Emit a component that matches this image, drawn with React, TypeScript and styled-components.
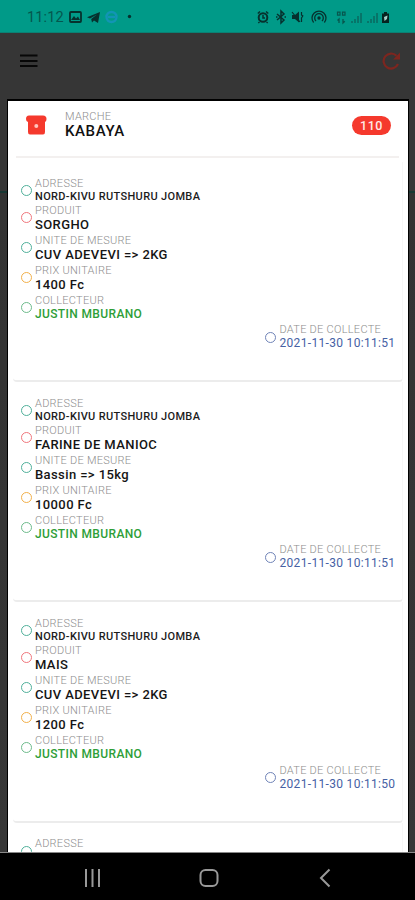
import React from 'react';
import styled, { createGlobalStyle } from 'styled-components';

const GlobalStyle = createGlobalStyle`
  * { box-sizing: border-box; }
  html, body { margin: 0; padding: 0; background: #363636; }
  body { font-family: Roboto, "Liberation Sans", sans-serif; }
  svg { display: block; flex: none; }
`;

const Screen = styled.div`
  width: 415px;
  height: 900px;
  display: flex;
  flex-direction: column;
  overflow: hidden;
  background: #363636;
`;

const StatusBar = styled.header`
  flex: none;
  height: 33px;
  padding: 2px 24px 0 27px;
  display: flex;
  align-items: center;
  justify-content: space-between;
  background: #009a88;
  border-bottom: 1px solid #0b8174;
`;

const StatusGroup = styled.div`
  display: flex;
  align-items: center;
`;

const Clock = styled.span`
  width: 37px;
  padding-top: 1px;
  font-size: 14.5px;
  line-height: 18px;
  letter-spacing: 0.15px;
  color: #04574e;
`;

const Toolbar = styled.div`
  flex: none;
  height: 66px;
  padding: 0 14px 10px 20px;
  display: flex;
  align-items: center;
  justify-content: space-between;
`;

const Body = styled.div`
  flex: 1;
  min-height: 0;
  padding: 0 6px 0 7px;
  background: linear-gradient(#363636 92px, #173733 92px, #173733 94px, #333 94px, #373737 100%);
  border-bottom: 1px solid #888;
`;

const Dialog = styled.main`
  height: 100%;
  overflow: hidden;
  border: 1px solid #000;
  border-top-width: 2px;
  border-bottom: 0;
  background: #fff;
  padding: 0 5px 0 5px;
`;

const MarketHeader = styled.section`
  height: 57px;
  margin: 0 4px 0 3px;
  padding: 0 8px 0 9px;
  display: flex;
  align-items: flex-start;
  border-bottom: 2px solid #f3f0ef;
`;

const MarketIcon = styled.div`
  width: 40px;
  padding-top: 13px;
`;

const MarketText = styled.div`
  flex: 1;
  padding-top: 9px;
`;

const MarketName = styled.div`
  font-size: 15px;
  line-height: 17px;
  font-weight: 500;
  letter-spacing: 0.6px;
  color: #111;
`;

const Badge = styled.span`
  width: 39px;
  height: 19px;
  margin-top: 15px;
  border-radius: 10px;
  display: flex;
  align-items: center;
  justify-content: center;
  background: #f5392d;
  color: #ffe9e6;
  font-size: 12.5px;
  font-weight: 500;
  letter-spacing: 0.5px;
`;

const Card = styled.article`
  height: 220.2px;
  padding: 14.7px 7px 0 7px;
  border-bottom: 2px solid #ececec;
  border-right: 1px solid #f7f7f7;
  border-radius: 0 0 4px 4px;
`;

const CardList = styled.div`
  padding-top: 4px;
`;

const Field = styled.div<{ $compact?: boolean; $end?: boolean }>`
  height: ${(p) => (p.$compact ? 27 : 30)}px;
  margin-top: ${(p) => (p.$end ? -0.4 : 0)}px;
  display: flex;
  align-items: flex-start;
  padding-left: ${(p) => (p.$end ? 244.5 : 0)}px;
`;

const Ring = styled.span<{ $color: string }>`
  flex: none;
  width: 11px;
  height: 11px;
  margin: 8.3px 3.4px 0 0.6px;
  border: 1.4px solid ${(p) => p.$color};
  border-radius: 50%;
`;

const Label = styled.div`
  font-size: 11px;
  line-height: 13px;
  font-weight: 300;
  letter-spacing: 0.27px;
  color: #8d8d8d;
  white-space: nowrap;
`;

type Tone = 'address' | 'plain' | 'person' | 'date';

const tones: Record<Tone, { size: number; line: number; weight: number; space: number; color: string }> = {
  address: { size: 11, line: 14, weight: 500, space: 0.34, color: '#1c1c1c' },
  plain: { size: 13, line: 16, weight: 500, space: 0.4, color: '#151515' },
  person: { size: 12, line: 15, weight: 500, space: 0.36, color: '#2e9e38' },
  date: { size: 12, line: 15, weight: 400, space: 0.32, color: '#4661a4' },
};

const Value = styled.div<{ $tone: Tone }>`
  font-size: ${(p) => tones[p.$tone].size}px;
  line-height: ${(p) => tones[p.$tone].line}px;
  font-weight: ${(p) => tones[p.$tone].weight};
  letter-spacing: ${(p) => tones[p.$tone].space}px;
  color: ${(p) => tones[p.$tone].color};
  white-space: nowrap;
`;

const NavBar = styled.nav`
  flex: none;
  height: 47px;
  padding: 2px 84px 0 84px;
  display: grid;
  grid-template-columns: 115px 1fr 12px;
  align-items: center;
  background: #000;
`;

interface Item {
  product: string;
  unit: string;
  price: string;
  date: string;
}

const items: Item[] = [
  { product: 'SORGHO', unit: 'CUV ADEVEVI => 2KG', price: '1400 Fc', date: '2021-11-30 10:11:51' },
  { product: 'FARINE DE MANIOC', unit: 'Bassin => 15kg', price: '10000 Fc', date: '2021-11-30 10:11:51' },
  { product: 'MAIS', unit: 'CUV ADEVEVI => 2KG', price: '1200 Fc', date: '2021-11-30 10:11:50' },
];

interface EntryProps {
  label: string;
  value?: string;
  color: string;
  tone?: Tone;
}

function Entry({ label, value, color, tone = 'plain' }: EntryProps) {
  return (
    <Field $compact={tone === 'address'} $end={tone === 'date'}>
      <Ring $color={color} />
      <div>
        <Label>{label}</Label>
        {value && <Value $tone={tone}>{value}</Value>}
      </div>
    </Field>
  );
}

function PriceCard({ item }: { item?: Item }) {
  return (
    <Card>
      <Entry label="ADRESSE" value={item && 'NORD-KIVU RUTSHURU JOMBA'} color="#4fb09a" tone="address" />
      {item && (
        <>
          <Entry label="PRODUIT" value={item.product} color="#f0767c" />
          <Entry label="UNITE DE MESURE" value={item.unit} color="#4fb09a" />
          <Entry label="PRIX UNITAIRE" value={item.price} color="#f2b04a" />
          <Entry label="COLLECTEUR" value="JUSTIN MBURANO" color="#6dbb8b" tone="person" />
          <Entry label="DATE DE COLLECTE" value={item.date} color="#6f83b7" tone="date" />
        </>
      )}
    </Card>
  );
}

const ink = '#06312e';

function NoticeIcons() {
  return (
    <svg width="70" height="16" viewBox="0 0 70 16" fill="none">
      <rect x="6" y="3" width="11" height="10" rx="1" stroke={ink} strokeWidth="1.8" />
      <path d="M7 11l3-4 2 2.4 2-1.8 2 3.4z" fill={ink} />
      <path d="M23 8.2L36 3l-2 11-4-2.4-2 2-.8-3.6L33 5.6 26 9.4z" fill={ink} />
      <circle cx="47.5" cy="8" r="5" stroke="#1295b5" strokeWidth="2.4" />
      <path d="M44 8h7" stroke="#1295b5" strokeWidth="2.4" />
      <circle cx="65.5" cy="7.5" r="1.7" fill={ink} />
    </svg>
  );
}

function SystemIcons() {
  return (
    <svg width="134" height="16" viewBox="0 0 134 16" fill="none" stroke={ink}>
      <circle cx="6" cy="8.5" r="4.3" strokeWidth="2" />
      <path d="M6 6v3h2M.8 4.5L3 2.5M9 2.5l2.3 2M2.5 13l-1.2 1M9.5 13l1.2 1" strokeWidth="1.5" />
      <path d="M20 5l7 6-3 3V2l3 3-7 6" strokeWidth="1.5" />
      <path d="M19 8h1.5M27.5 8H29" strokeWidth="1.5" />
      <path d="M35 6h3l4-3.5v11L38 10h-3z" fill={ink} stroke="none" />
      <path d="M35 3l8 10M44.5 3v3l1.3 1-1.3 2v4" strokeWidth="1.2" />
      <circle cx="62" cy="9" r="1.7" fill={ink} stroke="none" />
      <path d="M56.6 13.5a7 7 0 1 1 10.8 0M59 12a4.3 4.3 0 1 1 6 0" strokeWidth="1.3" />
      <g stroke="#07564d">
        <path d="M80.5 3.2h2.5v3h-2.5zM85.5 3.2H88v3h-2.5z" strokeWidth="1.2" />
        <path d="M82 14v-4l-1.5 1.5M86 10v4l1.8-1.8" strokeWidth="1.3" />
      </g>
      <g stroke="#087166" strokeWidth="1.8">
        <path d="M95 14v-2M98 14v-4M101 14V7M104 14V4" />
        <path d="M111 14v-2M114 14v-4M117 14V7M120 14V4" />
      </g>
      <path d="M125 4.5h2V3h3v1.5h2V14h-7z" fill="#052420" stroke="none" />
      <path d="M127 8l3.500-1.500-.5 3.500-2.500 2z" fill="#a4cfc8" stroke="none" />
    </svg>
  );
}

export default function App() {
  return (
    <>
      <GlobalStyle />
      <Screen>
        <StatusBar>
          <StatusGroup>
            <Clock>11:12</Clock>
            <NoticeIcons />
          </StatusGroup>
          <StatusGroup>
            <SystemIcons />
          </StatusGroup>
        </StatusBar>
        <Toolbar>
          <svg width="18" height="14" viewBox="0 0 18 14" stroke="#070707" strokeWidth="2">
            <path d="M0 1.5h17.5M0 7h17.5M0 12h17.5" />
          </svg>
          <svg width="19" height="20" viewBox="0 0 19 20" fill="none">
            <path d="M14.500 4.800A7.500 7.500 0 1 0 16 13" stroke="#7d261f" strokeWidth="2.200" />
            <path d="M18 1.500v7h-7z" fill="#7d261f" />
          </svg>
        </Toolbar>
        <Body>
          <Dialog>
            <MarketHeader>
              <MarketIcon>
                <svg width="22" height="22" viewBox="0 0 22 22">
                  <path
                    d="M4 1.500h14q3.500 0 3.500 3.500 0 2.500-1.500 3V18q0 2.500-2 2.500H5q-2 0-2-2.500V8Q1 7.500 1 5q0-3.500 3-3.500z"
                    fill="#f5392d"
                  />
                  <circle cx="11.300" cy="12" r="2" fill="#ffc4bd" />
                </svg>
              </MarketIcon>
              <MarketText>
                <Label>MARCHE</Label>
                <MarketName>KABAYA</MarketName>
              </MarketText>
              <Badge>110</Badge>
            </MarketHeader>
            <CardList>
              {items.map((item, i) => (
                <PriceCard key={i} item={item} />
              ))}
              <PriceCard />
            </CardList>
          </Dialog>
        </Body>
        <NavBar>
          <svg width="18" height="20" viewBox="0 0 18 20" stroke="#999" strokeWidth="2">
            <path d="M2 1v18M8.500 1v18M15 1v18" />
          </svg>
          <svg width="20" height="20" viewBox="0 0 20 20" fill="none" stroke="#999" strokeWidth="2">
            <rect x="1.500" y="2" width="17" height="16" rx="5" />
          </svg>
          <svg width="12" height="20" viewBox="0 0 12 20" fill="none" stroke="#999" strokeWidth="2">
            <path d="M10.500 1.500L2 10l8.500 8.500" />
          </svg>
        </NavBar>
      </Screen>
    </>
  );
}
